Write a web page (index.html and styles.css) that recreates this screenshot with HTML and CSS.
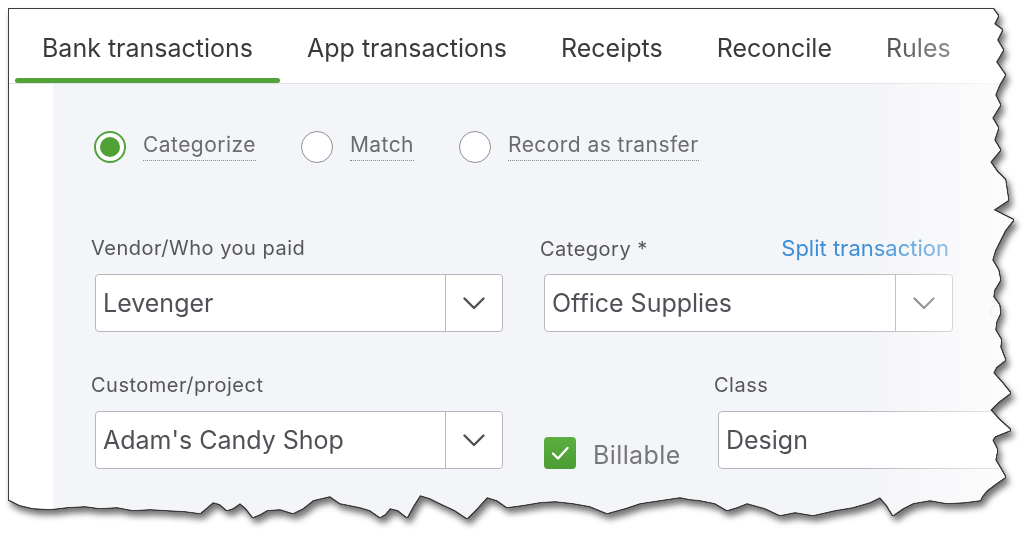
FILE: index.html
```html
<!DOCTYPE html>
<html lang="en">
<head>
<meta charset="utf-8">
<title>Bank transactions</title>
<link rel="stylesheet" href="styles.css">
</head>
<body>
<div class="stage">
  <div class="sheet">
    <nav class="tabs">
      <a class="tab active"><span class="tab-label">Bank transactions</span></a>
      <a class="tab"><span class="tab-label">App transactions</span></a>
      <a class="tab"><span class="tab-label">Receipts</span></a>
      <a class="tab"><span class="tab-label">Reconcile</span></a>
      <a class="tab"><span class="tab-label">Rules</span></a>
    </nav>
    <div class="body-row">
      <div class="gutter"></div>
      <section class="panel">
        <div class="radios">
          <label class="opt"><span class="radio on"></span><span class="opt-label">Categorize</span></label>
          <label class="opt"><span class="radio"></span><span class="opt-label">Match</span></label>
          <label class="opt"><span class="radio"></span><span class="opt-label">Record as transfer</span></label>
        </div>

        <div class="row row-first">
          <div class="field col-a">
            <div class="field-label">Vendor/Who you paid</div>
            <div class="select">
              <div class="select-value">Levenger</div>
              <div class="select-btn">
                <svg width="22" height="13" viewBox="0 0 22 13"><polyline points="1.5,1.5 11,11 20.5,1.5" fill="none" stroke="#4f5055" stroke-width="2.4" stroke-linecap="round" stroke-linejoin="round"/></svg>
              </div>
            </div>
          </div>
          <div class="field col-b">
            <div class="field-label label-split"><span>Category *</span><a class="link">Split transaction</a></div>
            <div class="select">
              <div class="select-value">Office Supplies</div>
              <div class="select-btn">
                <svg width="22" height="13" viewBox="0 0 22 13"><polyline points="1.5,1.5 11,11 20.5,1.5" fill="none" stroke="#6a6b70" stroke-width="2.2" stroke-linecap="round" stroke-linejoin="round"/></svg>
              </div>
            </div>
          </div>
          <span class="mini-dot"></span>
        </div>

        <div class="row row-second">
          <div class="field col-a">
            <div class="field-label">Customer/project</div>
            <div class="select">
              <div class="select-value">Adam's Candy Shop</div>
              <div class="select-btn">
                <svg width="22" height="13" viewBox="0 0 22 13"><polyline points="1.5,1.5 11,11 20.5,1.5" fill="none" stroke="#4f5055" stroke-width="2.4" stroke-linecap="round" stroke-linejoin="round"/></svg>
              </div>
            </div>
          </div>
          <label class="billable">
            <span class="checkbox">
              <svg width="32" height="32" viewBox="0 0 32 32"><polyline points="9,16.5 14,21.5 23.5,11" fill="none" stroke="#fff" stroke-width="2.4" stroke-linecap="round" stroke-linejoin="round"/></svg>
            </span>
            <span class="billable-label">Billable</span>
          </label>
          <div class="field col-c">
            <div class="field-label">Class</div>
            <div class="select">
              <div class="select-value">Design</div>
            </div>
          </div>
        </div>
      </section>
    </div>
  </div>
</div>
</body>
</html>
```

FILE: styles.css
```css
html, body {
  margin: 0;
  background: #ffffff;
}

body {
  font-family: Inter, "Open Sans", "DejaVu Sans", sans-serif;
  height: 548px;
  overflow: hidden;
}

.stage {
  padding: 9px 0 0 9px;
  width: fit-content;
  filter:
    drop-shadow(1px 0 0 #3c3c3c)
    drop-shadow(-1px 0 0 #3c3c3c)
    drop-shadow(0 1px 0 #3c3c3c)
    drop-shadow(0 -1px 0 #3c3c3c)
    drop-shadow(3px 5px 3px rgba(0, 0, 0, 0.55));
}

.sheet {
  position: relative;
  width: 1006px;
  height: 512px;
  background: #ffffff;
  display: flex;
  flex-direction: column;
  overflow: hidden;
  clip-path: polygon(
    0 0, 984px 0, 989px 7px, 985px 15px, 993px 21px, 988px 31px, 994px 41px, 987px 53px,
    996px 66px, 990px 76px, 986px 86px, 991px 96px, 983px 109px, 989px 119px, 985px 131px,
    991px 141px, 981px 153px, 988px 163px, 996px 171px, 999px 191px, 984px 201px, 992px 205px,
    1004px 211px, 996px 221px, 991px 231px, 986px 241px, 983px 251px, 989px 261px, 991px 271px,
    985px 281px, 984px 288px, 990px 296px, 991px 304px, 987px 313px, 986px 321px, 992px 331px,
    991px 338px, 996px 351px, 987px 358px, 984px 364px, 993px 374px, 1001px 384px, 989px 393px,
    981px 401px, 990px 411px, 1001px 421px, 986px 427px, 983px 431px, 988px 441px, 986px 451px,
    992px 461px, 996px 468px, 986px 475px, 978px 481px, 973px 487px, 971px 491px,
    956px 493px, 938px 494px, 921px 491px, 904px 494px, 894px 499px, 884px 506px, 878px 496px,
    871px 488px, 861px 493px, 844px 498px, 826px 501px, 804px 506px, 786px 503px, 771px 506px,
    756px 499px, 738px 494px, 728px 498px, 718px 501px, 706px 494px, 691px 491px, 681px 490px,
    671px 488px, 651px 491px, 631px 494px, 616px 499px, 598px 504px, 581px 497px, 564px 494px,
    546px 492px, 531px 493px, 513px 496px, 498px 498px, 488px 491px, 478px 488px, 468px 499px,
    458px 509px, 446px 501px, 431px 494px, 421px 489px, 411px 486px, 404px 497px, 398px 508px,
    389px 501px, 381px 499px, 376px 505px, 371px 508px, 361px 501px, 351px 498px, 341px 496px,
    331px 494px, 321px 487px, 304px 491px, 294px 499px, 284px 504px, 271px 500px, 258px 501px,
    251px 505px, 244px 508px, 237px 499px, 231px 494px, 224px 499px, 218px 501px, 211px 495px,
    204px 493px, 197px 499px, 191px 504px, 176px 502px, 158px 501px, 141px 500px, 124px 501px,
    108px 498px, 91px 499px, 76px 497px, 58px 498px, 41px 500px, 24px 499px, 11px 496px,
    1px 491px, 0 491px
  );
}

/* light fade toward the torn right edge */
.sheet::after {
  content: "";
  position: absolute;
  inset: 0;
  pointer-events: none;
  background: linear-gradient(to right, rgba(255, 255, 255, 0) 85%, rgba(255, 255, 255, 0.75) 100%);
}

/* ---------- tabs ---------- */
.tabs {
  display: flex;
  flex: none;
  height: 75px;
  box-sizing: border-box;
  padding-left: 6px;
  border-bottom: 1px solid #e0e2e5;
}

.tab {
  display: flex;
  flex-direction: column;
  padding-top: 26px;
  color: #393a3d;
  font-size: 25px;
  line-height: 26px;
  text-decoration: none;
}

.tab-label {
  margin: 0 27px 17px;
  white-space: nowrap;
}

.tab::after {
  content: "";
  height: 5px;
  border-radius: 3px;
  background: transparent;
}

.tab.active::after {
  background: #52a33a;
}

/* ---------- body ---------- */
.body-row {
  display: flex;
  flex: 1;
}

.gutter {
  width: 44px;
  flex: none;
  background: #ffffff;
}

.panel {
  flex: 1;
  background: #f4f5f8;
  padding: 47px 0 0 38px;
}

.radios {
  display: flex;
  align-items: center;
  margin-left: 3px;
  height: 32px;
}

.opt {
  display: flex;
  align-items: center;
  gap: 17px;
  margin-right: 45px;
}

.radio {
  width: 32px;
  height: 32px;
  box-sizing: border-box;
  border-radius: 50%;
  border: 1.5px solid #8e9197;
  background: #ffffff;
  display: grid;
  place-items: center;
}

.radio.on {
  border: 2px solid #52a33a;
}

.radio.on::after {
  content: "";
  width: 20px;
  height: 20px;
  border-radius: 50%;
  background: #4fa136;
}

.opt-label {
  font-size: 21px;
  letter-spacing: 0.45px;
  line-height: 24px;
  color: #6b6c72;
  padding-bottom: 3px;
  border-bottom: 1px dotted #8a8b90;
}

/* ---------- fields ---------- */
.row {
  display: flex;
}

.row-first {
  margin-top: 74px;
}

.row-second {
  margin-top: 42px;
}

.field {
  display: flex;
  flex-direction: column;
}

.col-a {
  width: 412px;
}

.col-b {
  width: 413px;
  margin-left: 37px;
}

.col-c {
  width: 420px;
}

.field-label {
  font-size: 20px;
  letter-spacing: 0.5px;
  line-height: 22px;
  height: 22px;
  color: #55565b;
  margin-bottom: 15px;
  white-space: nowrap;
}

.label-split {
  display: flex;
  justify-content: space-between;
  align-items: baseline;
  margin-right: 4px;
}

.link {
  color: #3d8ed8;
  font-size: 22px;
  letter-spacing: 0;
}

.select {
  margin-left: 4px;
  height: 58px;
  box-sizing: border-box;
  border: 1px solid #b4b7bc;
  border-radius: 4px;
  background: #ffffff;
  display: flex;
}

.select-value {
  flex: 1;
  display: flex;
  align-items: center;
  padding-left: 7px;
  font-size: 25px;
  color: #505156;
  white-space: nowrap;
}

.select-btn {
  width: 56px;
  flex: none;
  border-left: 1px solid #b4b7bc;
  display: flex;
  align-items: center;
  justify-content: center;
}

.mini-dot {
  width: 12px;
  height: 12px;
  box-sizing: border-box;
  border-radius: 50%;
  border: 1px solid #c9cbcf;
  margin: 68px 0 0 37px;
  flex: none;
}

.billable {
  display: flex;
  align-items: center;
  gap: 17px;
  width: 170px;
  margin-left: 41px;
  align-self: flex-end;
}

.checkbox {
  width: 32px;
  height: 32px;
  border-radius: 4px;
  background: linear-gradient(#5cae41, #4b9d33);
  display: block;
  flex: none;
}

.checkbox svg {
  display: block;
}

.billable-label {
  font-size: 25px;
  letter-spacing: 0.4px;
  line-height: 26px;
  color: #76777c;
  padding-top: 4px;
}
```
